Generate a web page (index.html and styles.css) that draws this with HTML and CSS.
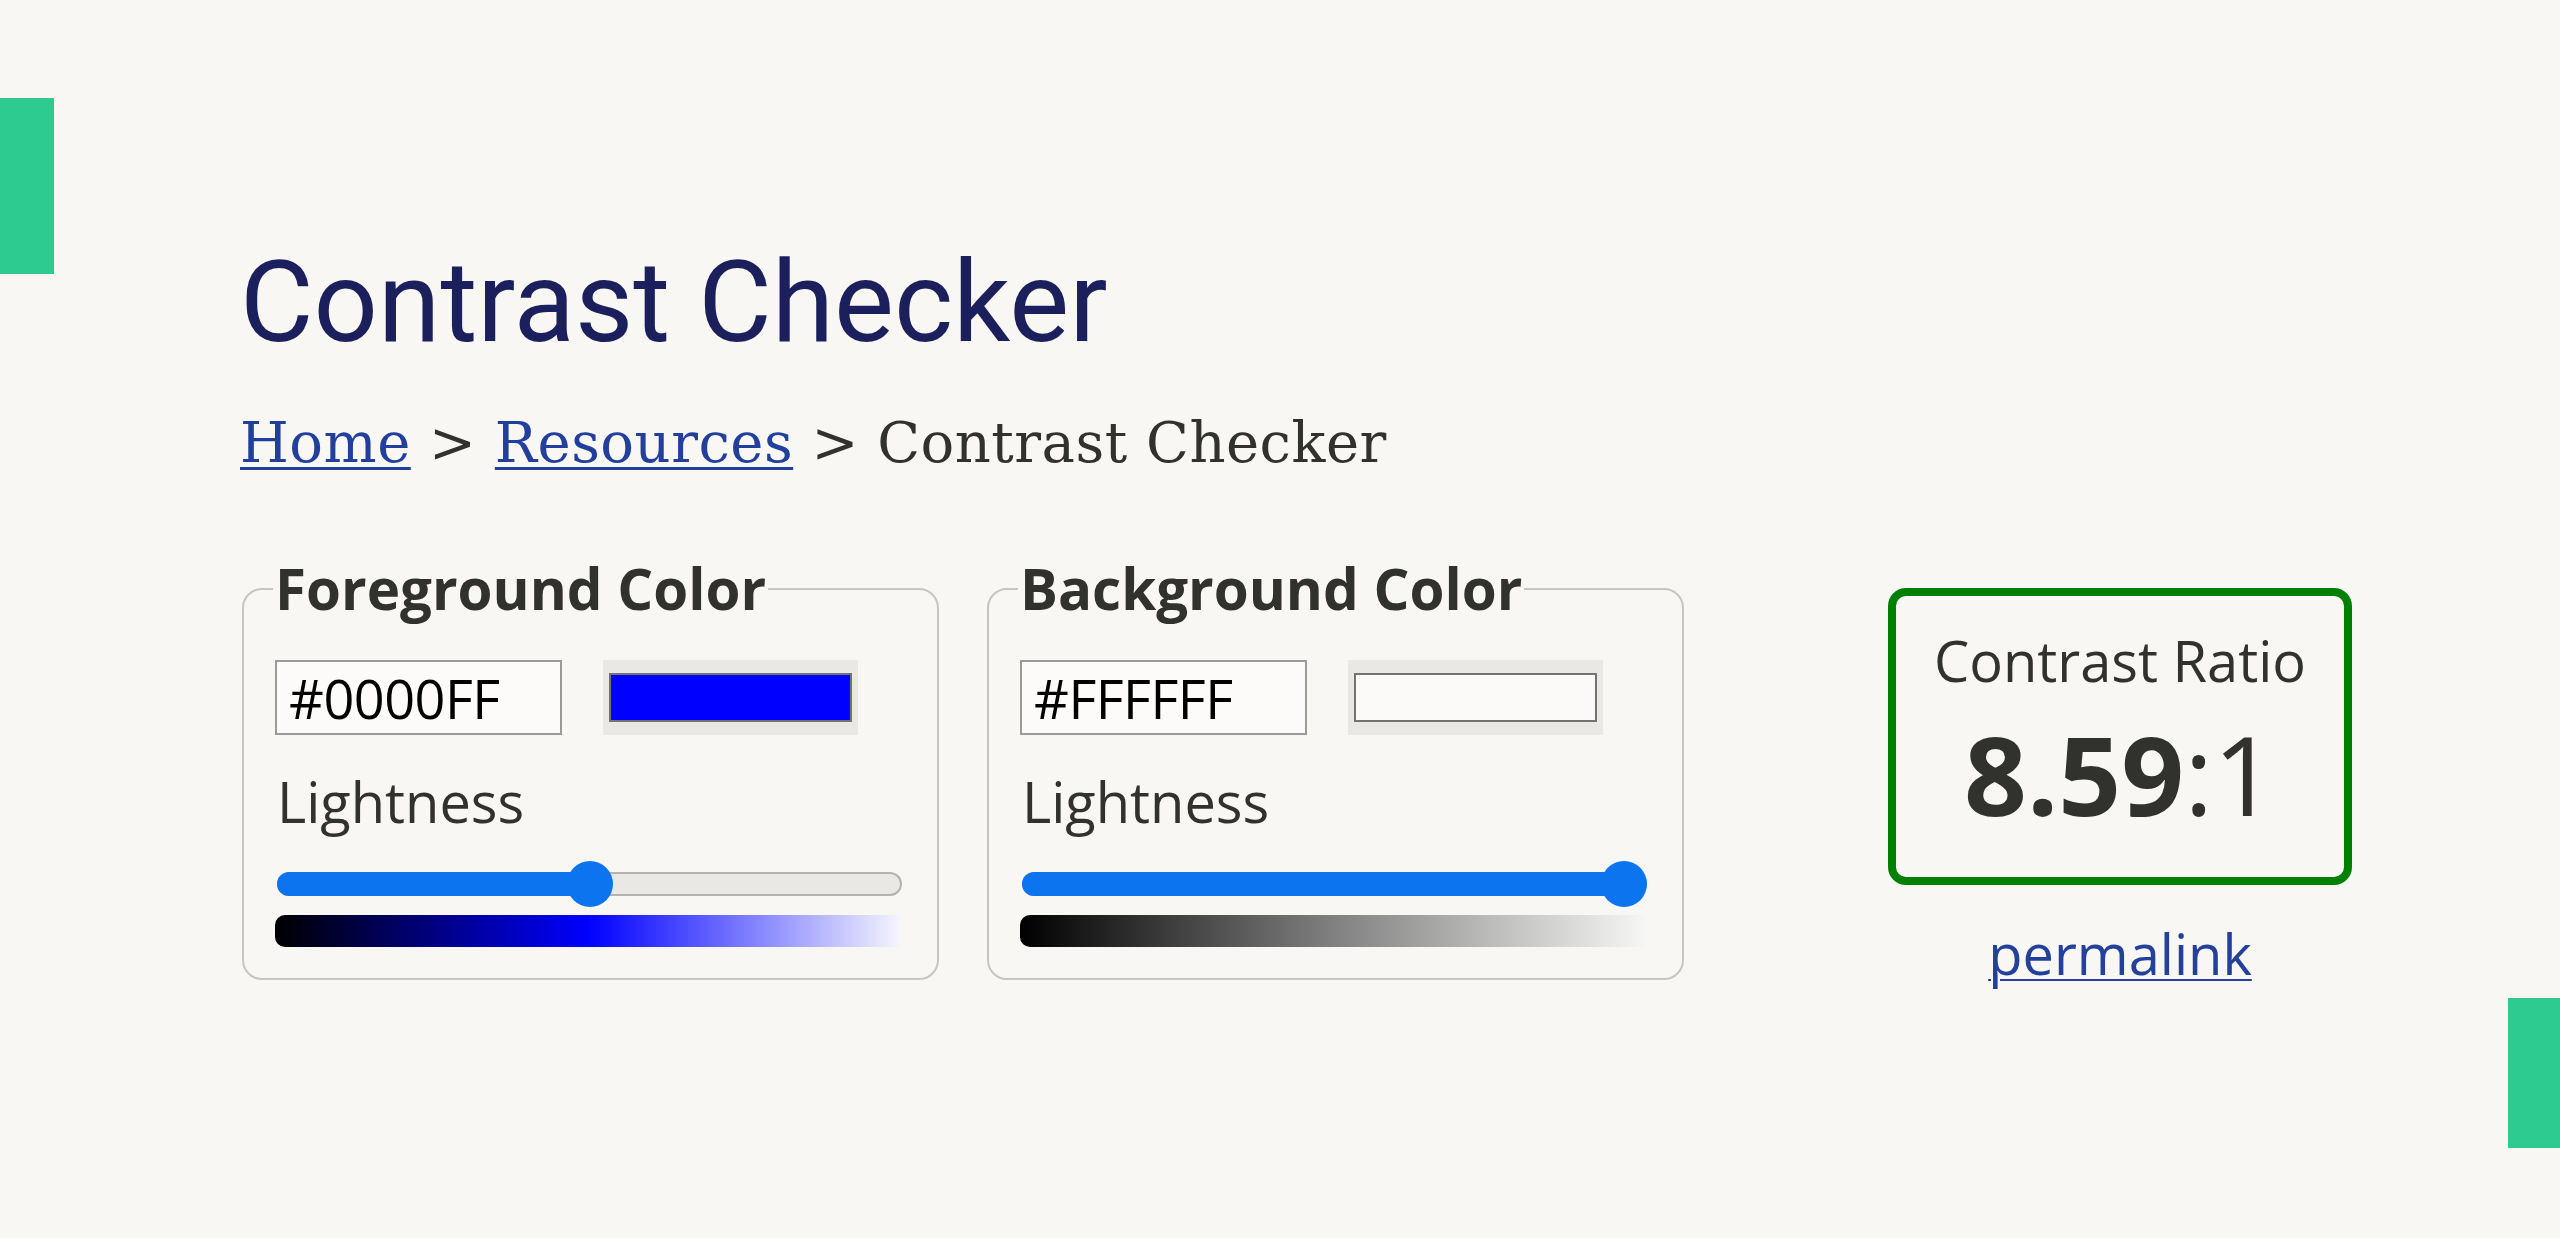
FILE: index.html
```html
<!DOCTYPE html>
<html lang="en">
<head>
<meta charset="utf-8">
<title>Contrast Checker</title>
<link rel="stylesheet" href="styles.css">
</head>
<body>
<div class="edge edge-left"></div>
<div class="edge edge-right"></div>
<main class="page">
  <h1 class="title">Contrast Checker</h1>
  <nav class="crumbs"><a href="#">Home</a> &gt; <a href="#">Resources</a> &gt; Contrast Checker</nav>
  <div class="tools">
    <fieldset class="picker">
      <legend>Foreground Color</legend>
      <div class="color-row">
        <input class="hex" type="text" value="#0000FF">
        <div class="swatch"><div class="swatch-inner swatch-blue"></div></div>
      </div>
      <div class="label">Lightness</div>
      <div class="slider" style="--p:0.5">
        <div class="track"><div class="rail"></div><div class="fill"></div></div>
        <div class="thumb"></div>
      </div>
      <div class="gradient gradient-blue"></div>
    </fieldset>
    <fieldset class="picker">
      <legend>Background Color</legend>
      <div class="color-row">
        <input class="hex" type="text" value="#FFFFFF">
        <div class="swatch"><div class="swatch-inner swatch-white"></div></div>
      </div>
      <div class="label">Lightness</div>
      <div class="slider" style="--p:1">
        <div class="track"><div class="rail"></div><div class="fill"></div></div>
        <div class="thumb"></div>
      </div>
      <div class="gradient gradient-gray"></div>
    </fieldset>
    <div class="result">
      <div class="ratio-box">
        <div class="ratio-label">Contrast Ratio</div>
        <div class="ratio-value"><strong>8.59</strong>:1</div>
      </div>
      <a class="permalink" href="#">permalink</a>
    </div>
  </div>
</main>
</body>
</html>
```
FILE: styles.css
```css
html, body {
  margin: 0;
  padding: 0;
}
body {
  background: #f8f7f4;
  color: #31322d;
  font-family: "Open Sans", "Noto Sans", sans-serif;
  font-size: 56px;
  min-height: 1238px;
  position: relative;
  overflow: hidden;
}
.edge {
  position: absolute;
  background: #2dcb8f;
}
.edge-left {
  left: 0;
  top: 98px;
  width: 54px;
  height: 176px;
}
.edge-right {
  right: 0;
  top: 998px;
  width: 52px;
  height: 150px;
}
.page {
  padding: 234px 0 0 240px;
}
.title {
  margin: 0;
  font-family: Roboto, "Liberation Sans", sans-serif;
  font-weight: 400;
  font-size: 113px;
  line-height: 138px;
  color: #1b1f5b;
}
.crumbs {
  margin-top: 39px;
  font-family: "DejaVu Serif", "Liberation Serif", serif;
  font-size: 56px;
  letter-spacing: 0.5px;
  line-height: 64px;
  color: #31322d;
}
.crumbs a {
  color: #223f9c;
  text-decoration-thickness: 3px;
  text-underline-offset: 5px;
}
.tools {
  margin-top: 78px;
  margin-left: 2px;
  display: flex;
  align-items: flex-start;
}
.picker {
  box-sizing: border-box;
  width: 697px;
  margin: 0 48px 0 0;
  padding: 35px 35px 31px 33px;
  border: 2px solid #c6c5c1;
  border-radius: 20px;
  min-inline-size: 0;
}
.picker legend {
  padding: 0 2px;
  margin-left: -4px;
  font-weight: 700;
  font-size: 56.5px;
  line-height: 72px;
  color: #31322d;
}
.color-row {
  display: flex;
  gap: 41px;
  margin-left: -2px;
}
.hex {
  box-sizing: border-box;
  width: 287px;
  height: 75px;
  margin: 0;
  padding: 0 0 0 12px;
  border: 2px solid #9a9a98;
  background: #fcfbf9;
  color: #000;
  font-family: "Open Sans", "Noto Sans", sans-serif;
  font-size: 54px;
  letter-spacing: -0.5px;
  outline: none;
}
.swatch {
  box-sizing: border-box;
  width: 255px;
  height: 75px;
  padding: 13px 6px;
  background: #e9e8e5;
}
.swatch-inner {
  box-sizing: border-box;
  height: 100%;
  border: 2px solid #74746f;
}
.swatch-blue {
  background: #0000ff;
}
.swatch-white {
  background: #fbfaf8;
}
.label {
  margin-top: 28px;
  line-height: 76px;
  color: #31322d;
}
.slider {
  position: relative;
  height: 46px;
  margin-top: 22px;
  display: flex;
  align-items: center;
}
.track {
  position: relative;
  flex: 1;
  height: 24px;
  border-radius: 12px;
  overflow: hidden;
  background: #b4b3af;
}
.rail {
  position: absolute;
  inset: 2px;
  border-radius: 10px;
  background: #e9e8e5;
}
.fill {
  position: absolute;
  left: 0;
  top: 0;
  bottom: 0;
  width: calc((100% - 46px) * var(--p) + 23px);
  background: #0b74ee;
}
.thumb {
  position: absolute;
  top: 0;
  left: calc((100% - 46px) * var(--p));
  width: 46px;
  height: 46px;
  border-radius: 50%;
  background: #0b74ee;
}
.gradient {
  margin-top: 8px;
  width: 626px;
  height: 32px;
  margin-left: -2px;
  border-radius: 10px 0 0 10px;
}
.gradient-blue {
  background: linear-gradient(to right, #000000 0%, #0000ff 50%, #f6f6fd 100%);
}
.gradient-gray {
  background: linear-gradient(to right, #000000 0%, #808080 50%, #f6f6f4 100%);
}
.result {
  margin-left: 156px;
  margin-top: 35px;
  width: 464px;
  display: flex;
  flex-direction: column;
  align-items: center;
  text-align: center;
}
.ratio-box {
  box-sizing: border-box;
  width: 464px;
  padding: 26px 0 29px;
  border: 8px solid #008000;
  border-radius: 18px;
}
.ratio-label {
  line-height: 76px;
}
.ratio-value {
  font-size: 110px;
  line-height: 150px;
}
.ratio-value strong {
  font-weight: 700;
}
.permalink {
  margin-top: 30px;
  line-height: 76px;
  color: #23409a;
  text-decoration-thickness: 2px;
  text-underline-offset: 4px;
}
```
